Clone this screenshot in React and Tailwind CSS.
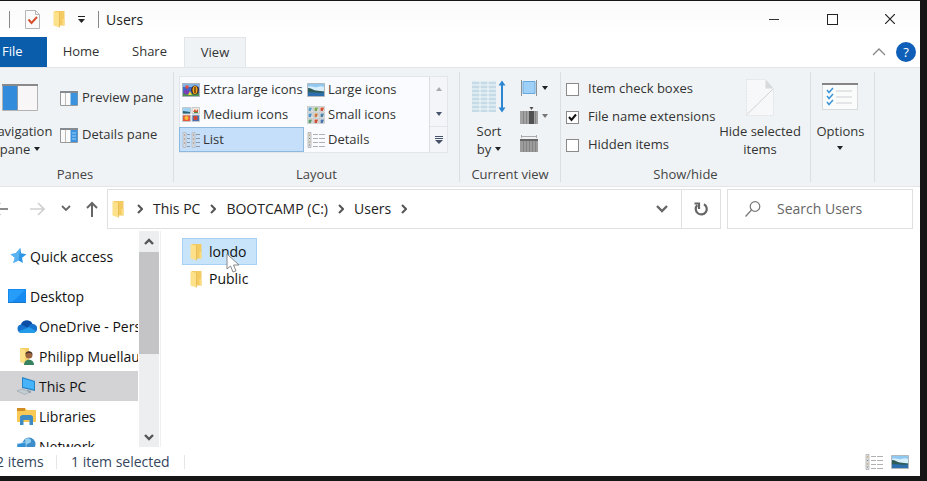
import React from "react";

function Folder({ className = "w-3 h-[18px]" }) {
  return (
    <svg viewBox="0 0 12 18" className={className} aria-hidden="true">
      <path d="M2 1h9.500v14.500H2z" fill="#f3cb62" />
      <path d="M0.500 1l6 2v14.500l-6-2z" fill="#fce08a" />
      <path d="M6.500 3v14.500" stroke="#e2b44a" strokeWidth=".7" />
      <path d="M9.500 9h2v6.500h-2z" fill="#fbdc83" />
    </svg>
  );
}

function Caret({ className = "text-[#222]" }) {
  return (
    <svg viewBox="0 0 6 4" className={`w-1.5 h-1 shrink-0 ${className}`} aria-hidden="true">
      <path d="M0 0h6L3 4z" fill="currentColor" />
    </svg>
  );
}

function Chevron({ className = "", d = "M1 1l4 4-4 4", box = "0 0 6 10", width = 2 }) {
  return (
    <svg viewBox={box} className={className} fill="none" stroke="currentColor" strokeWidth={width} aria-hidden="true">
      <path d={d} />
    </svg>
  );
}

function PaneIcon({ details }) {
  return (
    <svg viewBox="0 0 18 15" className="w-[18px] h-[15px] shrink-0" aria-hidden="true">
      <path d="M.5.5h17v14H.5z" fill="#fbfbfb" stroke="#999" />
      <path d="M0 0h18v2H0z" fill="#858b91" />
      <path d="M5.500 2v12" stroke="#bbb" />
      <path d="M10.500 2h7v12h-7z" fill="#3b93df" />
      {details && <path d="M12 5h4M12 8h4M12 11h4" stroke="#9fd0f8" />}
    </svg>
  );
}

function Landscape({ className = "w-[18px] h-[14px]" }) {
  return (
    <svg viewBox="0 0 18 14" className={`shrink-0 ${className}`} aria-hidden="true">
      <path d="M.5.5h17v13H.5z" fill="#8fc8f0" stroke="#b3b8bd" />
      <path d="M1 4c3-2 6 1 9 0s5-1 7 0v4H1z" fill="#d8eefa" />
      <path d="M1 5c3 0 5 2 8 2.500 3 .5 5 .5 8 1v2H1z" fill="#2f5c56" />
      <path d="M1 9.500c5-1 10 1 16 0V13H1z" fill="#2d6fae" />
    </svg>
  );
}

function Flowers() {
  return (
    <svg viewBox="0 0 18 14" className="w-[18px] h-[14px] shrink-0" aria-hidden="true">
      <path d="M.5.5h17v13H.5z" fill="#3f66c4" stroke="#a9b2bd" />
      <path d="M1 1h16v3H1z" fill="#7fb2e6" />
      <path d="M1 10h16v3H1z" fill="#4d9150" />
      <circle cx="4.500" cy="9" r="2.500" fill="#7b3fb5" />
      <circle cx="5" cy="4" r="1.800" fill="#e14f41" />
      <ellipse cx="13" cy="7" rx="3.800" ry="4.500" fill="#3a2222" />
      <ellipse cx="13" cy="7" rx="2.500" ry="4" fill="#f3a81d" />
      <path d="M13 4v6" stroke="#40200a" strokeWidth="1.200" />
      <path d="M6 12l2-4 2 4z" fill="#f0d13e" />
    </svg>
  );
}

function MediumIcon() {
  return (
    <svg viewBox="0 0 18 15" className="w-[18px] h-[15px] shrink-0" aria-hidden="true">
      <path d="M.5.5h8v6h-8z" fill="#9fd2f3" stroke="#c3c8cc" />
      <path d="M1 4l7 1v1.500H1z" fill="#2b6478" />
      <path d="M10 .5h7.500v6H10z" fill="#f1ece2" stroke="#c3c8cc" />
      <path d="M11 5l2-3 1 2 2-2v3z" fill="#cf5732" />
      <path d="M12 5h4v1h-4z" fill="#4f8f3e" />
      <path d="M.5 8h8v6.500h-8z" fill="#e8583a" stroke="#c3c8cc" />
      <circle cx="4.500" cy="11" r="2" fill="#f7c037" />
      <path d="M10 8h7.500v6.500H10z" fill="#4472b8" stroke="#c3c8cc" />
      <circle cx="13.500" cy="11" r="2.200" fill="#d8452e" />
    </svg>
  );
}

function SmallIcon() {
  const colors = ["#5c9fc9", "#7ba64e", "#cf5238", "#4f92c5", "#c87c43", "#4d82a8", "#5a9a6b", "#cd4e38", "#4a76ae"];
  return (
    <svg viewBox="0 0 18 18" className="w-[18px] h-[18px] shrink-0" aria-hidden="true">
      {colors.map((c, i) => {
        const x = (i % 3) * 6 + 0.5;
        const y = Math.floor(i / 3) * 6 + 0.5;
        return (
          <g key={i}>
            <rect x={x} y={y} width="5" height="5" fill="#f3f1ea" stroke="#b5bbc0" strokeWidth=".6" />
            <path d={`M${x + 1} ${y + 1}h3.500l-1 3.500h-2.500z`} fill={c} />
          </g>
        );
      })}
    </svg>
  );
}

function ListIcon({ className = "w-[18px] h-4" }) {
  return (
    <svg viewBox="0 0 18 16" className={`shrink-0 ${className}`} aria-hidden="true">
      <path d="M1 .5h3v15H1zM10 .5h3v15h-3z" fill="#d5dade" stroke="#a9b0b6" strokeWidth=".6" />
      <path d="M5 2.500h3M5 6.500h3M5 10.500h3M5 14.500h3M14 2.500h4M14 6.500h4M14 10.500h4M14 14.500h4" stroke="#8f989f" />
      <path d="M2 3h1M2 7h1M2 11h1M11 3h1M11 7h1M11 11h1" stroke="#a8745e" />
    </svg>
  );
}

function DetailsIcon() {
  return (
    <svg viewBox="0 0 18 16" className="w-[18px] h-4 shrink-0" aria-hidden="true">
      <path d="M1 .5h3v15H1z" fill="#e0e0df" stroke="#a6a6a6" strokeWidth=".7" />
      <path d="M6 2.500h5M12 2.500h6M6 6.500h5M12 6.500h6M6 10.500h5M12 10.500h6M6 14.500h5M12 14.500h6" stroke="#b0b0b3" />
      <path d="M2 3h1M2 10h1" stroke="#bd8647" />
      <path d="M2 6.500h1M2 13h1" stroke="#677f94" />
    </svg>
  );
}

function Group({ label, className, children }) {
  return (
    <section aria-label={label} className={`flex shrink-0 flex-col ${className}`}>
      <div className="flex h-[94px] min-w-0">{children}</div>
      <div className="h-6 text-center leading-6 text-[#444]">{label}</div>
    </section>
  );
}

function Divider() {
  return <div className="my-1 w-px shrink-0 bg-[#dcdfe2]" />;
}

function GalleryItem({ icon, children, selected }) {
  return (
    <button
      className={`flex h-[25px] w-[125px] items-center gap-[3px] border pl-0.5 whitespace-nowrap ${
        selected ? "border-[#8db9df] bg-[#c5dffa]" : "border-transparent"
      }`}
    >
      {icon}
      {children}
    </button>
  );
}

function Check({ children, checked }) {
  return (
    <label className="flex h-7 items-center gap-[9px] whitespace-nowrap">
      <span className="relative flex h-[13px] w-[13px]">
        <input
          type="checkbox"
          defaultChecked={checked}
          className="peer h-[13px] w-[13px] appearance-none border border-[#8a8a8a] bg-white"
        />
        <svg
          viewBox="0 0 13 13"
          className="pointer-events-none absolute inset-0 hidden peer-checked:block"
          fill="none"
          stroke="#111"
          strokeWidth="2"
          aria-hidden="true"
        >
          <path d="M3 6l2.500 3L10 3.500" />
        </svg>
      </span>
      {children}
    </label>
  );
}

function Ribbon() {
  return (
    <div className="flex h-[120px] shrink-0 overflow-hidden border-y border-[#e3e6e9] bg-[#f0f3f6] text-[13px] text-[#333]">
      <Group label="Panes" className="-ml-[23px] w-[196px]">
        <button className="ml-[3px] flex w-20 shrink-0 flex-col items-center pt-4 leading-[18px]">
          <svg viewBox="0 0 36 27" className="mb-[11px] h-[27px] w-9 shrink-0" aria-hidden="true">
            <path d="M.5.5h35v26H.5z" fill="#f8f6f6" stroke="#b3b3b3" />
            <path d="M0 0h36v2H0z" fill="#8a8a8a" />
            <path d="M1 2h14v24H1z" fill="#338bdb" />
            <path d="M15.500 2v24" stroke="#8b9aa6" />
          </svg>
          <span>Navigation</span>
          <span className="flex items-center gap-1">
            pane <Caret />
          </span>
        </button>
        <div className="flex flex-col gap-[13px] pt-[18px]">
          <button className="flex h-6 items-center gap-1 whitespace-nowrap">
            <PaneIcon /> Preview pane
          </button>
          <button className="flex h-6 items-center gap-1 whitespace-nowrap">
            <PaneIcon details /> Details pane
          </button>
        </div>
      </Group>
      <Divider />
      <Group label="Layout" className="w-[285px]">
        <div className="mt-2 ml-[5px] flex h-[77px] border border-[#e2e6ea] bg-[#f9fbfe]">
          <div className="-ml-px grid grid-cols-2">
            <GalleryItem icon={<Flowers />}>Extra large icons</GalleryItem>
            <GalleryItem icon={<Landscape />}>Large icons</GalleryItem>
            <GalleryItem icon={<MediumIcon />}>Medium icons</GalleryItem>
            <GalleryItem icon={<SmallIcon />}>Small icons</GalleryItem>
            <GalleryItem icon={<ListIcon />} selected>List</GalleryItem>
            <GalleryItem icon={<DetailsIcon />}>Details</GalleryItem>
          </div>
          <div className="flex w-[18px] flex-col border-l border-[#dadee2] bg-[#f3f5f8]">
            <button aria-label="Scroll up" className="flex flex-1 items-center justify-center">
              <Caret className="rotate-180 text-[#aaa]" />
            </button>
            <button aria-label="Scroll down" className="flex flex-1 items-center justify-center">
              <Caret className="text-[#46526a]" />
            </button>
            <button aria-label="More layouts" className="flex flex-1 items-center justify-center border-t border-[#e2e6ea]">
              <svg viewBox="0 0 8 8" className="h-2 w-2" fill="#46526a" aria-hidden="true">
                <path d="M0 0h8v1H0zM0 2h8v1H0zM0 4h8L4 8z" />
              </svg>
            </button>
          </div>
        </div>
      </Group>
      <Divider />
      <Group label="Current view" className="w-[100px]">
        <button className="ml-[7px] flex w-11 flex-col items-center pt-3 leading-[18px]">
          <svg viewBox="0 0 36 34" className="mb-2 h-[34px] w-9 shrink-0" aria-hidden="true">
            <path d="M1 1h24v31H1z" fill="#dcebf2" />
            <path d="M1 3h24M1 7h24M1 11h24M1 15h24M1 19h24M1 23h24M1 27h24M1 31h24" stroke="#bfd6e1" strokeWidth="1.500" />
            <path d="M9 1v31M17 1v31" stroke="#f0f6f9" />
            <path d="M31 3v27" stroke="#2d86d2" strokeWidth="2" />
            <path d="M27.500 5.500L31 .5l3.500 5zM27.500 27.500l3.500 5 3.500-5z" fill="#2d86d2" />
          </svg>
          <span>Sort</span>
          <span className="flex items-center gap-1">
            by <Caret />
          </span>
        </button>
        <div className="ml-[9px] flex flex-col pt-[6px]">
          <button aria-label="Group by" className="flex h-7 items-center gap-1">
            <svg viewBox="0 0 18 18" className="h-[18px] w-[18px]" aria-hidden="true">
              <path d="M3 2.500h12v12H3z" fill="#9fd1f8" stroke="#66a9df" />
              <path d="M1.500 1v16M16.500 1v16" stroke="#8b9095" />
            </svg>
            <Caret />
          </button>
          <button aria-label="Add columns" className="flex h-7 items-center gap-1">
            <svg viewBox="0 0 18 18" className="h-[18px] w-[18px]" aria-hidden="true">
              <path d="M0 4h18v13H0z" fill="#a2a2a2" />
              <path d="M3.500 4v13M6.500 4v13M15.500 4v13" stroke="#858585" />
              <path d="M9 4h5v13H9z" fill="#505050" />
              <path d="M9.500 0h4l-2 3z" fill="#505050" />
            </svg>
            <Caret className="text-[#777]" />
          </button>
          <button aria-label="Size all columns to fit" className="flex h-7 items-center">
            <svg viewBox="0 0 18 18" className="h-[18px] w-[18px]" aria-hidden="true">
              <path d="M0 4h18v13H0z" fill="#9c9c9c" />
              <path d="M0 5h18" stroke="#666" strokeWidth="2" />
              <path d="M3.500 6v11M6.500 6v11M9.500 6v11M12.500 6v11M15.500 6v11" stroke="#848484" />
              <path d="M1.500 0v3M16.500 0v3M1 1.500h16" stroke="#aaa" />
            </svg>
          </button>
        </div>
      </Group>
      <Divider />
      <Group label="Show/hide" className="w-[249px]">
        <div className="ml-[5px] flex w-[148px] shrink-0 flex-col pt-[7px]">
          <Check>Item check boxes</Check>
          <Check checked>File name extensions</Check>
          <Check>Hidden items</Check>
        </div>
        <button className="flex flex-1 flex-col items-center pt-[11px] pr-1 leading-[18px] whitespace-nowrap">
          <svg viewBox="0 0 28 37" className="mb-[6px] h-[37px] w-7 shrink-0" aria-hidden="true">
            <path d="M.5.500h19l8 9v27H.5z" fill="#f7f8f9" stroke="#e0e2e4" strokeDasharray="2 1" />
            <path d="M19.500.5v9h8z" fill="#d7d9db" />
            <path d="M.5 36L27 10" stroke="#d0d2d4" />
          </svg>
          <span>Hide selected</span>
          <span>items</span>
        </button>
      </Group>
      <Divider />
      <div className="flex w-[63px] shrink-0 justify-center pr-1">
        <button className="flex flex-col items-center pt-[15px] leading-[18px]">
          <svg viewBox="0 0 36 27" className="mb-3 h-[27px] w-9" fill="none" aria-hidden="true">
            <path d="M.5.5h35v26H.5z" fill="#fafbfb" stroke="#d8dadc" />
            <path d="M0 1h36" stroke="#858585" strokeWidth="2" />
            <path d="M5 7l2 2.500L11 5M5 13l2 2.500 4-4.500M5 19l2 2.500 4-4.500" stroke="#3d95d8" strokeWidth="1.500" />
            <path d="M14 8h16M14 14h16M14 20h16" stroke="#dcdee0" strokeWidth="1.500" />
          </svg>
          <span className="mb-[6px]">Options</span>
          <Caret />
        </button>
      </div>
      <Divider />
    </div>
  );
}

function TitleBar() {
  return (
    <header className="flex h-9 shrink-0 items-center bg-linear-to-b from-[#fafafb] to-white pr-px text-[14px]">
      <div className="ml-[9px] h-[17px] w-px bg-[#888]" />
      <button aria-label="Properties" className="ml-[15px]">
        <svg viewBox="0 0 15 19" className="h-[19px] w-[15px]" fill="none" aria-hidden="true">
          <path d="M.5.5h10l4 4v14H.5z" fill="#fafafa" stroke="#b5b5b5" />
          <path d="M10.500.5v4h4" stroke="#b5b5b5" />
          <path d="M3.500 9.500l3 3.500L12 7" stroke="#d4502d" strokeWidth="2" />
        </svg>
      </button>
      <button aria-label="New folder" className="ml-[13px]">
        <Folder />
      </button>
      <button aria-label="Customize toolbar" className="ml-[13px]">
        <svg viewBox="0 0 7 7" className="h-[7px] w-[7px]" fill="#222" aria-hidden="true">
          <path d="M0 0h7v1H0zM0 3h7L3.500 7z" />
        </svg>
      </button>
      <div className="ml-[13px] h-[17px] w-px bg-[#888]" />
      <h1 className="ml-[7px] text-[#222]">Users</h1>
      <div className="ml-auto flex h-full">
        <button aria-label="Minimize" className="flex w-[58px] items-center justify-center">
          <span className="h-px w-2.5 bg-[#333]" />
        </button>
        <button aria-label="Maximize" className="flex w-[58px] items-center justify-center">
          <span className="h-[11px] w-[11px] border border-[#222]" />
        </button>
        <button aria-label="Close" className="flex w-[58px] items-center justify-center">
          <Chevron d="M0 0l10 10M10 0L0 10" box="0 0 10 10" width={1.2} className="h-2.5 w-2.5 text-[#222]" />
        </button>
      </div>
    </header>
  );
}

function Tabs() {
  return (
    <nav className="flex h-[30px] shrink-0 text-[13px] text-[#333]">
      <button className="w-[47px] bg-[#0a5dab] pl-0.5 text-left text-white">File</button>
      <button className="w-[68px]">Home</button>
      <button className="w-[69px]">Share</button>
      <button className="w-[62px] border border-b-0 border-[#e1e5e8] bg-[#f0f3f6]">View</button>
      <div className="ml-auto flex items-center gap-[10px] pr-1">
        <button aria-label="Collapse ribbon">
          <Chevron d="M1 7l6-6 6 6" box="0 0 14 8" width={1.3} className="h-2 w-3.5 text-[#888]" />
        </button>
        <button aria-label="Help" className="h-5 w-5 rounded-full bg-[#0f5fb8] text-[13px] leading-5 text-white">
          ?
        </button>
      </div>
    </nav>
  );
}

const arrowBox = "0 0 16 14";

function AddressRow() {
  return (
    <div className="flex h-[43px] shrink-0 items-center overflow-hidden pr-[7px] text-[14px] text-[#222]">
      <button aria-label="Back" className="-ml-[7px] text-[#666]">
        <Chevron d="M7 1L1 7l6 6M1 7h14" box={arrowBox} width={1.6} className="h-3.5 w-4" />
      </button>
      <button aria-label="Forward" className="ml-5 text-[#d0d0d0]">
        <Chevron d="M9 1l6 6-6 6M15 7H1" box={arrowBox} width={1.6} className="h-3.5 w-4" />
      </button>
      <button aria-label="Recent locations" className="ml-4 text-[#666]">
        <Chevron d="M1 1l4 4 4-4" box="0 0 10 7" width={1.8} className="h-[7px] w-2.5" />
      </button>
      <button aria-label="Up" className="ml-[15px] text-[#666]">
        <Chevron d="M1 7l5-5 5 5M6 2v14" box="0 0 12 16" width={2} className="h-4 w-3" />
      </button>
      <div className="ml-[9px] flex h-10 flex-1 items-center border border-[#e0e0e0] pl-1">
        <Folder />
        <Chevron className="ml-[13px] h-2.5 w-1.5 text-[#555]" />
        <a href="#pc" className="ml-[10px] whitespace-nowrap">This PC</a>
        <Chevron className="ml-[10px] h-2.5 w-1.5 text-[#555]" />
        <a href="#c" className="ml-[10px] whitespace-nowrap">BOOTCAMP (C:)</a>
        <Chevron className="ml-[10px] h-2.5 w-1.5 text-[#555]" />
        <a href="#users" className="ml-[10px]">Users</a>
        <Chevron className="ml-[10px] h-2.5 w-1.5 text-[#555]" />
        <button aria-label="Previous locations" className="ml-auto mr-[13px] text-[#666]">
          <Chevron d="M1 1l5 5 5-5" box="0 0 12 8" width={2.4} className="h-2 w-3" />
        </button>
        <button aria-label="Refresh" className="flex h-full w-[39px] items-center justify-center border-l border-[#e0e0e0] text-[#666]">
          <svg viewBox="0 0 14 14" className="h-3.5 w-3.5" fill="none" stroke="currentColor" strokeWidth="2.200" aria-hidden="true">
            <path d="M10 2.200A5.500 5.500 0 1 1 3.200 3.200M.5 1.500H5V7" />
          </svg>
        </button>
      </div>
      <label className="ml-[6px] flex h-10 w-[186px] items-center border border-[#e0e0e0] pl-[17px] text-[#666]">
        <svg viewBox="0 0 16 16" className="h-4 w-4 shrink-0" fill="none" stroke="#777" strokeWidth="1.200" aria-hidden="true">
          <circle cx="10" cy="5.500" r="4.800" />
          <path d="M6.500 9L.5 15.500" />
        </svg>
        <input aria-label="Search Users" placeholder="Search Users" className="ml-4 w-full min-w-0 outline-none placeholder:text-[#666]" />
      </label>
    </div>
  );
}

const treeIcons = {
  star: (
    <svg viewBox="0 0 18 18" className="h-4 w-[21px] shrink-0" aria-hidden="true">
      <path d="M11 0l1 6 6 1-5 4 1 6-5-3-6 3 2-6-5-4 6-1z" fill="#2f96e6" />
      <path d="M11 0L9 14l-6 3 2-6-5-4 6-1z" fill="#5bb2f0" />
    </svg>
  ),
  desktop: (
    <svg viewBox="0 0 18 14" className="h-3.5 w-[18px] shrink-0" aria-hidden="true">
      <path d="M0 0h18v14H0z" fill="#168af0" />
      <path d="M1 1h16L4 13H1z" fill="#279dfa" />
      <path d="M0 13h18v1H0z" fill="#1678c9" />
    </svg>
  ),
  cloud: (
    <svg viewBox="0 0 20 13" className="h-[13px] w-5 shrink-0" aria-hidden="true">
      <path d="M4.500 13a4.300 4.300 0 0 1-.5-8.500A6.300 6.300 0 0 1 15.500 4 4.500 4.500 0 0 1 16 13z" fill="#1672cf" />
      <path d="M4 4.500A6.300 6.300 0 0 1 15.500 4c-3 0-4 2-4 4z" fill="#0d4ea5" />
      <path d="M1.500 11.500L12 7l7 4c-1 1.500-2 2-3 2H4.500c-1 0-2-.5-3-1.500z" fill="#239be8" />
    </svg>
  ),
  user: (
    <svg viewBox="0 0 18 18" className="h-[18px] w-[18px] shrink-0" aria-hidden="true">
      <path d="M3 1h9v14H3z" fill="#f4cd68" />
      <path d="M3 1l5 2v14l-5-2z" fill="#fce08a" />
      <circle cx="12" cy="8" r="3.500" fill="#9a623f" />
      <path d="M8.500 7.500C8 3 15.500 3 15.500 7.500l-2-1.500h-3z" fill="#46342a" />
      <path d="M7 18c0-7 10-7 10 0z" fill="#378360" />
    </svg>
  ),
  pc: (
    <svg viewBox="0 0 19 18" className="h-[18px] w-[19px] shrink-0" aria-hidden="true">
      <path d="M5 0l13 4v10L5 11z" fill="#2583c6" />
      <path d="M6 1.500l11 3.300v7.700L6 10z" fill="#46b3fa" />
      <path d="M10 13l4 1v2l-4-1z" fill="#8a9aa7" />
      <path d="M0 14l5-2 8 3-5 2.500z" fill="#c3cdd4" stroke="#909ba3" strokeWidth=".5" />
    </svg>
  ),
  libraries: (
    <svg viewBox="0 0 19 17" className="h-[17px] w-[19px] shrink-0" aria-hidden="true">
      <path d="M0 0h8l2 2h9v12H0z" fill="#f8c957" />
      <path d="M0 0h8v3H0z" fill="#d28c24" />
      <path d="M3 17V8.500L5 7h9l2 1.500V17h-3.500v-5h-6v5z" fill="#3f8cc4" />
    </svg>
  ),
  network: (
    <svg viewBox="0 0 19 18" className="h-[18px] w-[19px] shrink-0" aria-hidden="true">
      <circle cx="12" cy="7" r="6.500" fill="#3c8dca" />
      <path d="M8 2c4-2 7 1 6 3s-5 1-5 4z" fill="#91cdec" />
      <path d="M0 7l9-2v9l-9 1z" fill="#2f90d6" stroke="#a9d4ef" strokeWidth=".7" />
    </svg>
  ),
};

function TreeRow({ icon, level = 0, selected, children }) {
  return (
    <button
      className={`flex h-[30px] w-full shrink-0 items-center whitespace-nowrap ${level ? "pl-[17px]" : "pl-2"} ${
        selected ? "bg-[#d3d2d4]" : ""
      }`}
    >
      <span className="flex w-[22px] shrink-0">{treeIcons[icon]}</span>
      {children}
    </button>
  );
}

function Body() {
  return (
    <div className="flex min-h-0 flex-1 pt-px text-[14px] text-[#111]">
      <aside className="flex w-[138px] shrink-0 flex-col overflow-hidden pt-[10px]">
        <TreeRow icon="star">Quick access</TreeRow>
        <div className="h-[10px] shrink-0" />
        <TreeRow icon="desktop">Desktop</TreeRow>
        <TreeRow icon="cloud" level={1}>OneDrive - Personal</TreeRow>
        <TreeRow icon="user" level={1}>Philipp Muellauer</TreeRow>
        <TreeRow icon="pc" level={1} selected>This PC</TreeRow>
        <TreeRow icon="libraries" level={1}>Libraries</TreeRow>
        <TreeRow icon="network" level={1}>Network</TreeRow>
      </aside>
      <div className="ml-px flex w-5 shrink-0 flex-col bg-[#eceef0] text-[#555]">
        <button aria-label="Scroll up" className="flex h-[21px] items-center justify-center">
          <Chevron d="M1 6l4-4 4 4" box="0 0 10 8" width={2.4} className="h-2 w-2.5" />
        </button>
        <div className="h-[102px] bg-[#c4c4c6]" />
        <button aria-label="Scroll down" className="mt-auto flex h-[21px] items-center justify-center">
          <Chevron d="M1 2l4 4 4-4" box="0 0 10 8" width={2.4} className="h-2 w-2.5" />
        </button>
      </div>
      <main className="ml-px flex-1 border-l border-[#f0f0f0] pt-[7px] pl-[21px]">
        <button className="relative flex h-[27px] w-[75px] items-center gap-[7px] border border-[#a6d1f5] bg-[#c8e4fb] pl-[7px]">
          <Folder />
          londo
          <svg viewBox="0 0 14 20" className="absolute top-[14px] left-[43px] h-5 w-3.5" aria-hidden="true">
            <path d="M1 1v15l3.500-3 2.500 6 3-1.200L7.500 12H13z" fill="#fff" stroke="#888" />
          </svg>
        </button>
        <button className="flex h-[27px] w-[75px] items-center gap-[7px] border border-transparent pl-[7px]">
          <Folder />
          Public
        </button>
      </main>
    </div>
  );
}

function StatusBar() {
  return (
    <footer className="flex h-[29px] shrink-0 items-center overflow-hidden text-[14px] text-[#34465e]">
      <span className="-ml-1 w-[60px]">2 items</span>
      <span className="h-[14px] w-px bg-[#e6e6e6]" />
      <span className="ml-[14px] w-[113px] whitespace-nowrap">1 item selected</span>
      <span className="h-[14px] w-px bg-[#e6e6e6]" />
      <div className="ml-auto flex items-center gap-2 pr-[11px]">
        <button aria-label="Details view">
          <DetailsIcon />
        </button>
        <button aria-label="Thumbnail view">
          <Landscape />
        </button>
      </div>
    </footer>
  );
}

export default function App() {
  return (
    <div className="h-screen overflow-hidden bg-[#161617] pt-px pr-[7px] pb-[5px] font-['Open_Sans','Noto_Sans',sans-serif]">
      <div className="flex h-full flex-col overflow-hidden bg-white">
        <TitleBar />
        <Tabs />
        <Ribbon />
        <AddressRow />
        <Body />
        <StatusBar />
      </div>
    </div>
  );
}
